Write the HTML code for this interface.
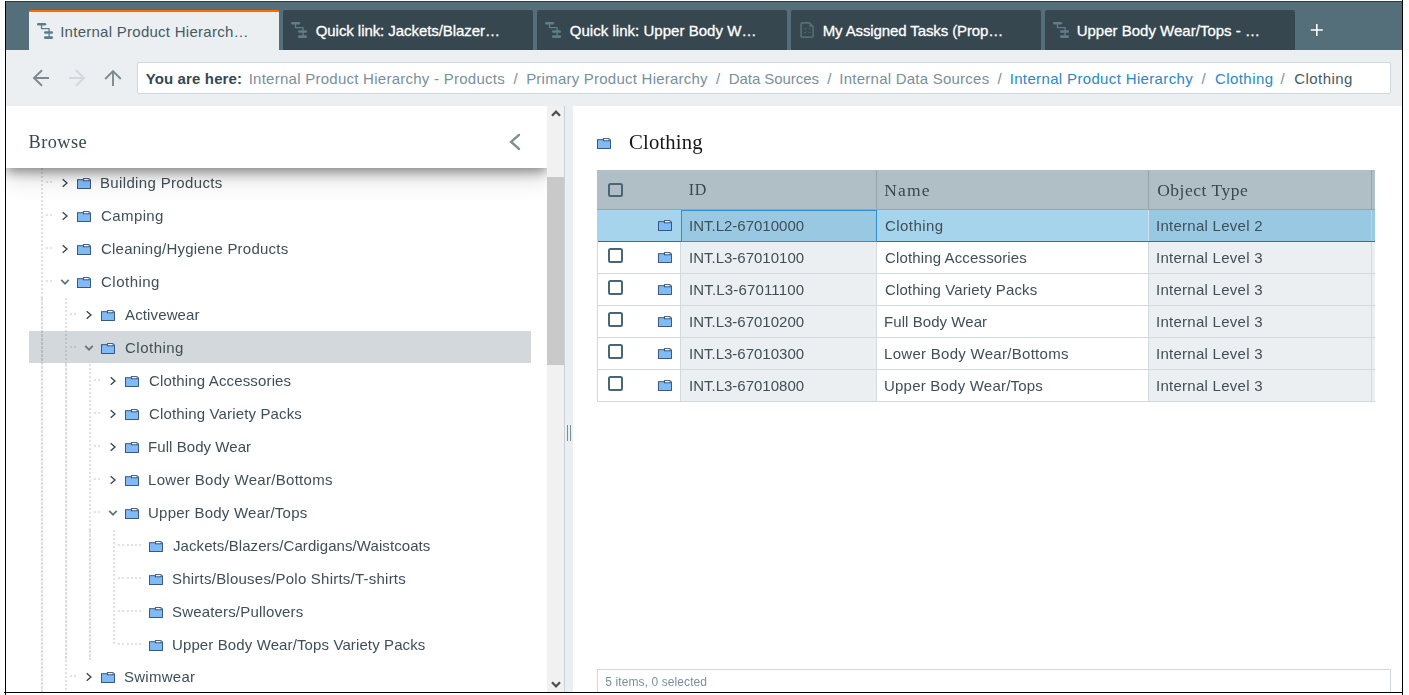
<!DOCTYPE html>
<html>
<head>
<meta charset="utf-8">
<title>Internal Product Hierarchy</title>
<style>
*{box-sizing:border-box;}
html,body{margin:0;padding:0;background:#fff;}
body{width:1409px;height:695px;position:relative;overflow:hidden;font-family:"Liberation Sans",sans-serif;color:#37474f;}
.a{position:absolute;}
.t{position:absolute;white-space:nowrap;line-height:24px;height:24px;}
.g{will-change:transform;}
svg{position:absolute;overflow:visible;}
.tab{position:absolute;top:10px;height:40px;width:250px;background:#37474f;border-radius:2px 2px 0 0;}
.tab.on{background:#eceff1;border-top:2px solid #ff6d00;border-radius:2px 1px 0 0;}
.vl{position:absolute;width:2px;background-image:linear-gradient(to bottom,rgba(69,90,100,0.17) 0,rgba(69,90,100,0.17) 2px,rgba(255,255,255,0) 2px,rgba(255,255,255,0) 4px);background-size:2px 4px;}
.vd{position:absolute;width:2px;background-image:linear-gradient(to bottom,rgba(69,90,100,0.2) 0,rgba(69,90,100,0.2) 3px,rgba(255,255,255,0) 3px,rgba(255,255,255,0) 4px);background-size:2px 4px;}
.hd{position:absolute;height:2px;background-image:linear-gradient(to right,rgba(69,90,100,0.17) 0,rgba(69,90,100,0.17) 2px,rgba(255,255,255,0) 2px,rgba(255,255,255,0) 4px);background-size:4px 2px;}
.hd2{position:absolute;height:2px;background-image:linear-gradient(to right,rgba(69,90,100,0.17) 0,rgba(69,90,100,0.17) 1px,rgba(255,255,255,0) 1px,rgba(255,255,255,0) 2px);background-size:2px 2px;opacity:.9}
.cb{position:absolute;width:14.8px;height:14.8px;border:2px solid #4b6575;border-radius:2.5px;}
</style>
</head>
<body>
<svg width="0" height="0">
<defs>
<symbol id="fold" viewBox="0 0 14 11" overflow="visible">
<rect x="0.5" y="1.7" width="13" height="8.8" fill="#80bbf7" stroke="#2e4a72" stroke-width="0.9"/>
<rect x="6.4" y="0.6" width="5.7" height="2.2" fill="#fff" stroke="#2e4a72" stroke-width="0.9"/>
<path d="M12.1 0.5 L13.6 2.1" fill="none" stroke="#6db0f7" stroke-width="1"/>
</symbol>
<symbol id="chr" viewBox="0 0 8 10" overflow="visible">
<path d="M1.7 1.2 L6 5 L1.7 8.8" fill="none" stroke="#37474f" stroke-width="1.35"/>
</symbol>
<symbol id="chd" viewBox="0 0 10 8" overflow="visible">
<path d="M1.2 1.8 L5 5.7 L8.8 1.8" fill="none" stroke="#63757e" stroke-width="1.7"/>
</symbol>
<symbol id="hier" viewBox="0 0 18 17" overflow="visible">
<rect x="1" y="1" width="9.2" height="2.5" rx="1.2" fill="currentColor"/>
<path d="M5.5 3 V6.6 H13.1 V15.5" fill="none" stroke="currentColor" stroke-width="1.3" stroke-linejoin="round"/>
<rect x="8" y="9.3" width="9" height="2.5" rx="1.2" fill="currentColor"/>
<rect x="8" y="14.3" width="9" height="2.6" rx="1.2" fill="currentColor"/>
</symbol>
</defs>
</svg>

<div class="a" style="left:6px;top:2px;width:1396px;height:48px;background:#546e7a"></div>
<div class="a" style="left:6px;top:50px;width:1396px;height:56px;background:#eceff1"></div>
<div class="a" style="left:5px;top:1px;width:1398px;height:1px;background:#2b3b44"></div>
<div class="tab on" style="left:29px"></div>
<svg width="18" height="17" style="left:36px;top:22px;color:#5d7b89"><use href="#hier"/></svg>
<span class="t" style="left:60.17px;top:19.80px;font-size:15px;color:#455a64;letter-spacing:0.265px;">Internal Product Hierarch…</span>
<div class="tab" style="left:283px"></div>
<svg width="18" height="17" style="left:290px;top:21px;color:#5f7d8b"><use href="#hier"/></svg>
<span class="t" style="left:315.72px;top:19.40px;font-size:15px;color:#ffffff;letter-spacing:-0.062px;-webkit-text-stroke:0.3px #fff;">Quick link: Jackets/Blazer…</span>
<div class="tab" style="left:537px"></div>
<svg width="18" height="17" style="left:544px;top:21px;color:#5f7d8b"><use href="#hier"/></svg>
<span class="t" style="left:569.72px;top:19.40px;font-size:15px;color:#ffffff;letter-spacing:0.033px;-webkit-text-stroke:0.3px #fff;">Quick link: Upper Body W…</span>
<div class="tab" style="left:791px"></div>
<svg width="16" height="18" style="left:799px;top:21px" viewBox="0 0 16 18"><path d="M3.3 1.9 H10.2 L14.1 5.7 V15 Q14.1 16.2 12.9 16.2 H3.3 Q2.1 16.2 2.1 15 V3.1 Q2.1 1.9 3.3 1.9 Z" fill="none" stroke="#546e7a" stroke-width="1.7"/><path d="M10.2 1.9 V5.7 H14.1 Z" fill="#546e7a"/><path d="M5 7.4 l1 1 l1.6 -1.8 M5 11 l1 1 l1.6 -1.8 M9.4 7.8 h2 M9.4 11.4 h2" fill="none" stroke="#4d6570" stroke-width="1"/></svg>
<span class="t" style="left:822.64px;top:19.40px;font-size:15px;color:#ffffff;letter-spacing:-0.106px;-webkit-text-stroke:0.3px #fff;">My Assigned Tasks (Prop…</span>
<div class="tab" style="left:1045px"></div>
<svg width="18" height="17" style="left:1052px;top:21px;color:#5f7d8b"><use href="#hier"/></svg>
<span class="t" style="left:1076.69px;top:19.40px;font-size:15px;color:#ffffff;letter-spacing:0.005px;-webkit-text-stroke:0.3px #fff;">Upper Body Wear/Tops - …</span>
<svg width="14" height="14" style="left:1310px;top:23px" viewBox="0 0 14 14"><path d="M0.8 7 H12.8 M6.8 1 V13" stroke="#fff" stroke-width="1.6" fill="none"/></svg>
<svg width="18" height="18" style="left:32px;top:69px" viewBox="0 0 18 18"><path d="M17 9 H2 M10 1.2 L2 9 L10 16.8" fill="none" stroke="#7b8a91" stroke-width="1.9"/></svg>
<svg width="18" height="18" style="left:68px;top:69px" viewBox="0 0 18 18"><path d="M1 9 H16 M8 1.2 L16 9 L8 16.8" fill="none" stroke="#cfd8dc" stroke-width="1.9"/></svg>
<svg width="18" height="18" style="left:104px;top:69px" viewBox="0 0 18 18"><path d="M9 17 V2 M1.2 10 L9 2 L16.8 10" fill="none" stroke="#7b8a91" stroke-width="1.9"/></svg>
<div class="a" style="left:137px;top:62px;width:1254px;height:32px;background:#fff;border:1px solid #cfd8dc;border-radius:2px"></div>
<span class="t" style="left:145.70px;top:66.70px;font-size:15px;color:#37474f;font-weight:bold;letter-spacing:0.135px;">You are here:</span>
<span class="t" style="left:248.67px;top:66.70px;font-size:15px;color:#78909c;letter-spacing:0.258px;">Internal Product Hierarchy - Products</span>
<span class="t" style="left:513.39px;top:66.70px;font-size:15px;color:#78909c;">/</span>
<span class="t" style="left:526.14px;top:66.70px;font-size:15px;color:#78909c;letter-spacing:0.234px;">Primary Product Hierarchy</span>
<span class="t" style="left:715.89px;top:66.70px;font-size:15px;color:#78909c;">/</span>
<span class="t" style="left:728.84px;top:66.70px;font-size:15px;color:#78909c;letter-spacing:-0.068px;">Data Sources</span>
<span class="t" style="left:827.29px;top:66.70px;font-size:15px;color:#78909c;">/</span>
<span class="t" style="left:839.37px;top:66.70px;font-size:15px;color:#78909c;letter-spacing:0.236px;">Internal Data Sources</span>
<span class="t" style="left:997.49px;top:66.70px;font-size:15px;color:#78909c;">/</span>
<span class="t" style="left:1009.67px;top:66.70px;font-size:15px;color:#2e86c5;letter-spacing:0.352px;">Internal Product Hierarchy</span>
<span class="t" style="left:1201.49px;top:66.70px;font-size:15px;color:#78909c;">/</span>
<span class="t" style="left:1214.88px;top:66.70px;font-size:15px;color:#2e86c5;letter-spacing:0.447px;">Clothing</span>
<span class="t" style="left:1280.49px;top:66.70px;font-size:15px;color:#78909c;">/</span>
<span class="t" style="left:1294.18px;top:66.70px;font-size:15px;color:#455a64;letter-spacing:0.447px;">Clothing</span>
<div class="a" style="left:6px;top:106px;width:541px;height:586px;background:#fff"></div>
<div class="a" style="left:29px;top:331px;width:502px;height:32px;background:#d3d8dc"></div>
<div class="vl" style="left:41px;top:168px;height:130px"></div>
<div class="vd" style="left:41px;top:298px;height:394px"></div>
<div class="vl" style="left:65px;top:298px;height:66px"></div>
<div class="vd" style="left:65px;top:364px;height:296px"></div>
<div class="vl" style="left:65px;top:660px;height:32px"></div>
<div class="vl" style="left:89px;top:364px;height:166px"></div>
<div class="vd" style="left:89px;top:530px;height:130px"></div>
<div class="vl" style="left:113px;top:530px;height:114px"></div>
<div class="hd" style="left:46px;top:181.2px;width:8px"></div>
<svg width="8" height="10" style="left:61px;top:177.9px"><use href="#chr"/></svg>
<svg width="14" height="11" style="left:77px;top:178.0px"><use href="#fold"/></svg>
<span class="t g" style="left:99.84px;top:170.80px;font-size:15px;color:#3f4f58;letter-spacing:0.344px;">Building Products</span>
<div class="hd" style="left:46px;top:214.2px;width:8px"></div>
<svg width="8" height="10" style="left:61px;top:210.9px"><use href="#chr"/></svg>
<svg width="14" height="11" style="left:77px;top:211.0px"><use href="#fold"/></svg>
<span class="t g" style="left:100.88px;top:203.80px;font-size:15px;color:#3f4f58;letter-spacing:0.404px;">Camping</span>
<div class="hd" style="left:46px;top:247.2px;width:8px"></div>
<svg width="8" height="10" style="left:61px;top:243.9px"><use href="#chr"/></svg>
<svg width="14" height="11" style="left:77px;top:244.0px"><use href="#fold"/></svg>
<span class="t g" style="left:100.88px;top:236.80px;font-size:15px;color:#3f4f58;letter-spacing:0.224px;">Cleaning/Hygiene Products</span>
<div class="hd" style="left:46px;top:280.2px;width:8px"></div>
<svg width="10" height="8" style="left:60px;top:278.0px"><use href="#chd"/></svg>
<svg width="14" height="11" style="left:77px;top:277.0px"><use href="#fold"/></svg>
<span class="t g" style="left:100.88px;top:269.80px;font-size:15px;color:#3f4f58;letter-spacing:0.489px;">Clothing</span>
<div class="hd" style="left:70px;top:313.2px;width:8px"></div>
<svg width="8" height="10" style="left:85px;top:309.9px"><use href="#chr"/></svg>
<svg width="14" height="11" style="left:101px;top:310.0px"><use href="#fold"/></svg>
<span class="t g" style="left:124.82px;top:302.80px;font-size:15px;color:#3f4f58;letter-spacing:0.131px;">Activewear</span>
<div class="hd" style="left:70px;top:346.2px;width:8px"></div>
<svg width="10" height="8" style="left:84px;top:344.0px"><use href="#chd"/></svg>
<svg width="14" height="11" style="left:101px;top:343.0px"><use href="#fold"/></svg>
<span class="t g" style="left:124.88px;top:335.80px;font-size:15px;color:#3f4f58;letter-spacing:0.489px;">Clothing</span>
<div class="hd" style="left:94px;top:379.2px;width:8px"></div>
<svg width="8" height="10" style="left:109px;top:375.9px"><use href="#chr"/></svg>
<svg width="14" height="11" style="left:125px;top:376.0px"><use href="#fold"/></svg>
<span class="t g" style="left:148.88px;top:368.80px;font-size:15px;color:#3f4f58;letter-spacing:0.151px;">Clothing Accessories</span>
<div class="hd" style="left:94px;top:412.2px;width:8px"></div>
<svg width="8" height="10" style="left:109px;top:408.9px"><use href="#chr"/></svg>
<svg width="14" height="11" style="left:125px;top:409.0px"><use href="#fold"/></svg>
<span class="t g" style="left:148.88px;top:401.80px;font-size:15px;color:#3f4f58;letter-spacing:0.146px;">Clothing Variety Packs</span>
<div class="hd" style="left:94px;top:445.2px;width:8px"></div>
<svg width="8" height="10" style="left:109px;top:441.9px"><use href="#chr"/></svg>
<svg width="14" height="11" style="left:125px;top:442.0px"><use href="#fold"/></svg>
<span class="t g" style="left:147.84px;top:434.80px;font-size:15px;color:#3f4f58;letter-spacing:0.066px;">Full Body Wear</span>
<div class="hd" style="left:94px;top:478.2px;width:8px"></div>
<svg width="8" height="10" style="left:109px;top:474.9px"><use href="#chr"/></svg>
<svg width="14" height="11" style="left:125px;top:475.0px"><use href="#fold"/></svg>
<span class="t g" style="left:147.84px;top:467.80px;font-size:15px;color:#3f4f58;letter-spacing:0.287px;">Lower Body Wear/Bottoms</span>
<div class="hd" style="left:94px;top:511.2px;width:8px"></div>
<svg width="10" height="8" style="left:108px;top:509.0px"><use href="#chd"/></svg>
<svg width="14" height="11" style="left:125px;top:508.0px"><use href="#fold"/></svg>
<span class="t g" style="left:147.89px;top:500.80px;font-size:15px;color:#3f4f58;letter-spacing:0.234px;">Upper Body Wear/Tops</span>
<div class="hd" style="left:118px;top:544.2px;width:8px"></div>
<div class="hd" style="left:127px;top:544.2px;width:16px"></div>
<svg width="14" height="11" style="left:149px;top:541.0px"><use href="#fold"/></svg>
<span class="t g" style="left:172.51px;top:533.80px;font-size:15px;color:#3f4f58;letter-spacing:0.080px;">Jackets/Blazers/Cardigans/Waistcoats</span>
<div class="hd" style="left:118px;top:577.2px;width:8px"></div>
<div class="hd" style="left:127px;top:577.2px;width:16px"></div>
<svg width="14" height="11" style="left:149px;top:574.0px"><use href="#fold"/></svg>
<span class="t g" style="left:172.45px;top:566.80px;font-size:15px;color:#3f4f58;letter-spacing:0.231px;">Shirts/Blouses/Polo Shirts/T-shirts</span>
<div class="hd" style="left:118px;top:610.2px;width:8px"></div>
<div class="hd" style="left:127px;top:610.2px;width:16px"></div>
<svg width="14" height="11" style="left:149px;top:607.0px"><use href="#fold"/></svg>
<span class="t g" style="left:172.45px;top:599.80px;font-size:15px;color:#3f4f58;letter-spacing:0.168px;">Sweaters/Pullovers</span>
<div class="hd" style="left:118px;top:643.2px;width:8px"></div>
<div class="hd" style="left:127px;top:643.2px;width:16px"></div>
<svg width="14" height="11" style="left:149px;top:640.0px"><use href="#fold"/></svg>
<span class="t g" style="left:171.89px;top:632.80px;font-size:15px;color:#3f4f58;letter-spacing:0.115px;">Upper Body Wear/Tops Variety Packs</span>
<div class="hd" style="left:70px;top:675.4px;width:8px"></div>
<svg width="8" height="10" style="left:85px;top:672.1px"><use href="#chr"/></svg>
<svg width="14" height="11" style="left:101px;top:672.2px"><use href="#fold"/></svg>
<span class="t g" style="left:124.45px;top:665.00px;font-size:15px;color:#3f4f58;letter-spacing:0.264px;">Swimwear</span>
<div class="a" style="left:6px;top:106px;width:541px;height:586px;overflow:hidden"><div class="a" style="left:0;top:0;width:541px;height:62px;background:#fff;box-shadow:0 4px 11px rgba(0,0,0,0.4),0 10px 26px rgba(0,0,0,0.15)"></div></div>
<span class="t" style="left:28.47px;top:130.00px;font-size:18.3px;color:#37474f;font-family:'Liberation Serif',serif;letter-spacing:0.465px;">Browse</span>
<svg width="12" height="18" style="left:509px;top:133px" viewBox="0 0 12 18"><path d="M10 1.9 L2.1 8.9 L10 15.9" fill="none" stroke="#808d93" stroke-width="2.4" stroke-linecap="round"/></svg>
<div class="a" style="left:547px;top:106px;width:17px;height:586px;background:#f1f1f1"></div>
<div class="a" style="left:547px;top:177px;width:17px;height:188px;background:#c9c9c9"></div>
<svg width="10" height="7" style="left:550.6px;top:110.2px" viewBox="0 0 10 7"><path d="M1 5.8 L5 1.7 L9 5.8" fill="none" stroke="#4f4f4f" stroke-width="2.2"/></svg>
<svg width="10" height="7" style="left:550.6px;top:681px" viewBox="0 0 10 7"><path d="M1 1.2 L5 5.3 L9 1.2" fill="none" stroke="#4f4f4f" stroke-width="2.2"/></svg>
<div class="a" style="left:564px;top:106px;width:1px;height:586px;background:#c8d2d8"></div>
<div class="a" style="left:565px;top:106px;width:8px;height:586px;background:#eceff1"></div>
<div class="a" style="left:567px;top:425px;width:1px;height:16px;background:#78909c"></div>
<div class="a" style="left:570px;top:425px;width:1px;height:16px;background:#78909c"></div>
<div class="a" style="left:573px;top:106px;width:829px;height:586px;background:#fff"></div>
<svg width="14" height="11" style="left:597px;top:138.3px"><use href="#fold"/></svg>
<span class="t g" style="left:629.11px;top:130.30px;font-size:20.7px;color:#161616;font-family:'Liberation Serif',serif;letter-spacing:0.170px;">Clothing</span>
<div class="a" style="left:597px;top:170px;width:778px;height:39.5px;background:#b0bec5"></div>
<div class="a" style="left:876px;top:170px;width:1px;height:39px;background:#94a5ae"></div>
<div class="a" style="left:1148px;top:170px;width:1px;height:39px;background:#94a5ae"></div>
<div class="a" style="left:1371px;top:170px;width:1px;height:39px;background:#94a5ae"></div>
<div class="a" style="left:597px;top:209px;width:778px;height:1px;background:#97a7af"></div>
<div class="cb" style="left:608.1px;top:182.6px"></div>
<span class="t" style="left:688.77px;top:178.20px;font-size:16px;color:#37474f;font-family:'Liberation Serif',serif;letter-spacing:0.779px;">ID</span>
<span class="t" style="left:884.30px;top:177.70px;font-size:17.5px;color:#37474f;font-family:'Liberation Serif',serif;letter-spacing:1.148px;">Name</span>
<span class="t" style="left:1157.21px;top:177.70px;font-size:17.5px;color:#37474f;font-family:'Liberation Serif',serif;letter-spacing:0.513px;">Object Type</span>
<div class="a" style="left:597px;top:209.5px;width:778px;height:31.5px;background:#a6d4ec"></div>
<div class="a" style="left:681px;top:209.5px;width:196px;height:32px;background:#99c9e2;border:1px solid #2f8fd6"></div>
<div class="a" style="left:1148px;top:209.5px;width:227px;height:31.5px;background:#99c9e2"></div>
<div class="a" style="left:1371px;top:210px;width:1px;height:31px;background:#b6d6e7"></div>
<div class="a" style="left:1148px;top:210px;width:1px;height:31px;background:#cfe1eb"></div>
<div class="a" style="left:597px;top:240.6px;width:778px;height:1.2px;background:#4f6b7a"></div>
<div class="a" style="left:681px;top:240.5px;width:196px;height:1px;background:#2f8fd6"></div>
<div class="a" style="left:681px;top:242.0px;width:196px;height:31.0px;background:#eceff1"></div>
<div class="a" style="left:1148px;top:242.0px;width:227px;height:31.0px;background:#eceff1"></div>
<div class="a" style="left:597px;top:273px;width:778px;height:1px;background:#d3dade"></div>
<div class="cb" style="left:608.1px;top:248.2px;background:#fff"></div>
<div class="a" style="left:681px;top:274.0px;width:196px;height:31.0px;background:#eceff1"></div>
<div class="a" style="left:1148px;top:274.0px;width:227px;height:31.0px;background:#eceff1"></div>
<div class="a" style="left:597px;top:305px;width:778px;height:1px;background:#d3dade"></div>
<div class="cb" style="left:608.1px;top:280.2px;background:#fff"></div>
<div class="a" style="left:681px;top:306.0px;width:196px;height:31.0px;background:#eceff1"></div>
<div class="a" style="left:1148px;top:306.0px;width:227px;height:31.0px;background:#eceff1"></div>
<div class="a" style="left:597px;top:337px;width:778px;height:1px;background:#d3dade"></div>
<div class="cb" style="left:608.1px;top:312.2px;background:#fff"></div>
<div class="a" style="left:681px;top:338.0px;width:196px;height:31.0px;background:#eceff1"></div>
<div class="a" style="left:1148px;top:338.0px;width:227px;height:31.0px;background:#eceff1"></div>
<div class="a" style="left:597px;top:369px;width:778px;height:1px;background:#d3dade"></div>
<div class="cb" style="left:608.1px;top:344.2px;background:#fff"></div>
<div class="a" style="left:681px;top:370.0px;width:196px;height:31.0px;background:#eceff1"></div>
<div class="a" style="left:1148px;top:370.0px;width:227px;height:31.0px;background:#eceff1"></div>
<div class="a" style="left:597px;top:401px;width:778px;height:1px;background:#d3dade"></div>
<div class="cb" style="left:608.1px;top:376.2px;background:#fff"></div>
<div class="a" style="left:597px;top:241px;width:1px;height:161px;background:#cfd8dc"></div>
<div class="a" style="left:680px;top:241.8px;width:1px;height:160px;background:#d3dade"></div>
<div class="a" style="left:876px;top:241.8px;width:1px;height:160px;background:#d3dade"></div>
<div class="a" style="left:1148px;top:241.8px;width:1px;height:160px;background:#d3dade"></div>
<div class="a" style="left:1371px;top:241.8px;width:1px;height:160px;background:#d3dade"></div>
<svg width="14" height="11" style="left:658.1px;top:219.9px" viewBox="0 0 14 11"><use href="#fold"/></svg>
<span class="t g" style="left:688.67px;top:214.20px;font-size:15px;color:#3f4f58;">INT.L2-67010000</span>
<span class="t g" style="left:884.88px;top:214.20px;font-size:15px;color:#3f4f58;letter-spacing:0.447px;">Clothing</span>
<span class="t g" style="left:1155.97px;top:214.20px;font-size:15px;color:#3f4f58;letter-spacing:0.268px;">Internal Level 2</span>
<svg width="14" height="11" style="left:658.1px;top:251.9px" viewBox="0 0 14 11"><use href="#fold"/></svg>
<span class="t g" style="left:688.67px;top:246.20px;font-size:15px;color:#3f4f58;">INT.L3-67010100</span>
<span class="t g" style="left:884.88px;top:246.20px;font-size:15px;color:#3f4f58;letter-spacing:0.136px;">Clothing Accessories</span>
<span class="t g" style="left:1155.97px;top:246.20px;font-size:15px;color:#3f4f58;letter-spacing:0.268px;">Internal Level 3</span>
<svg width="14" height="11" style="left:658.1px;top:283.9px" viewBox="0 0 14 11"><use href="#fold"/></svg>
<span class="t g" style="left:688.67px;top:278.20px;font-size:15px;color:#3f4f58;letter-spacing:0.159px;">INT.L3-67011100</span>
<span class="t g" style="left:884.88px;top:278.20px;font-size:15px;color:#3f4f58;letter-spacing:0.113px;">Clothing Variety Packs</span>
<span class="t g" style="left:1155.97px;top:278.20px;font-size:15px;color:#3f4f58;letter-spacing:0.268px;">Internal Level 3</span>
<svg width="14" height="11" style="left:658.1px;top:315.9px" viewBox="0 0 14 11"><use href="#fold"/></svg>
<span class="t g" style="left:688.67px;top:310.20px;font-size:15px;color:#3f4f58;">INT.L3-67010200</span>
<span class="t g" style="left:883.84px;top:310.20px;font-size:15px;color:#3f4f58;letter-spacing:0.066px;">Full Body Wear</span>
<span class="t g" style="left:1155.97px;top:310.20px;font-size:15px;color:#3f4f58;letter-spacing:0.268px;">Internal Level 3</span>
<svg width="14" height="11" style="left:658.1px;top:347.9px" viewBox="0 0 14 11"><use href="#fold"/></svg>
<span class="t g" style="left:688.67px;top:342.20px;font-size:15px;color:#3f4f58;">INT.L3-67010300</span>
<span class="t g" style="left:883.84px;top:342.20px;font-size:15px;color:#3f4f58;letter-spacing:0.287px;">Lower Body Wear/Bottoms</span>
<span class="t g" style="left:1155.97px;top:342.20px;font-size:15px;color:#3f4f58;letter-spacing:0.268px;">Internal Level 3</span>
<svg width="14" height="11" style="left:658.1px;top:379.9px" viewBox="0 0 14 11"><use href="#fold"/></svg>
<span class="t g" style="left:688.67px;top:374.20px;font-size:15px;color:#3f4f58;">INT.L3-67010800</span>
<span class="t g" style="left:883.89px;top:374.20px;font-size:15px;color:#3f4f58;letter-spacing:0.213px;">Upper Body Wear/Tops</span>
<span class="t g" style="left:1155.97px;top:374.20px;font-size:15px;color:#3f4f58;letter-spacing:0.268px;">Internal Level 3</span>
<div class="a" style="left:597px;top:669px;width:794px;height:24px;border:1px solid #cfd8dc;border-bottom:none;background:#fff"></div>
<span class="t" style="left:605.32px;top:670.20px;font-size:12px;color:#78909c;letter-spacing:0.091px;">5 items, 0 selected</span>
<div class="a" style="left:5px;top:1px;width:1px;height:694px;background:#000"></div>
<div class="a" style="left:1402px;top:0;width:1px;height:695px;background:#000"></div>
<div class="a" style="left:4px;top:692px;width:1399px;height:1px;background:#000"></div>
<div class="a" style="left:0;top:693px;width:1409px;height:2px;background:#fff"></div>
<div class="a" style="left:5px;top:693px;width:1px;height:2px;background:#000"></div>
<div class="a" style="left:1402px;top:693px;width:1px;height:2px;background:#000"></div>
</body>
</html>
